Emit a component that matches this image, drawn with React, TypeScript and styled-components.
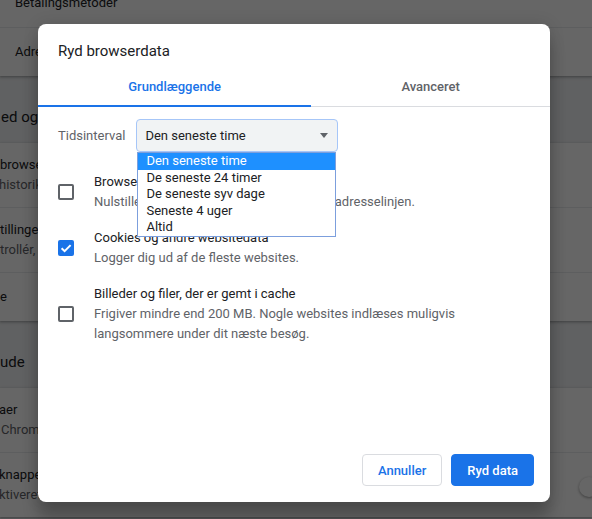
import React from "react";
import styled, { createGlobalStyle } from "styled-components";

const GlobalStyle = createGlobalStyle`
  html, body { margin: 0; padding: 0; }
  body { font-family: Roboto, "Noto Sans", "Liberation Sans", sans-serif; }
  * { box-sizing: border-box; }
`;

const Stage = styled.div`
  position: relative;
  width: 592px;
  height: 519px;
  overflow: hidden;
  background: #f1f3f4;
`;

/* ---------- background settings page ---------- */

const SettingsPage = styled.div`
  display: flex;
  flex-direction: column;
  margin-top: -21px;
  font-size: 13px;
  color: #202124;
`;

const Card = styled.div`
  background: #ffffff;
  box-shadow: 0 1px 2px rgba(60, 64, 67, 0.3), 0 1px 3px 1px rgba(60, 64, 67, 0.15);
`;

const SettingRow = styled.div<{ $tall?: boolean; $indent?: number }>`
  box-sizing: content-box;
  display: flex;
  align-items: center;
  height: ${(p) => (p.$tall ? 64 : 48)}px;
  padding-left: ${(p) => p.$indent ?? 0}px;
  & + & {
    border-top: 1px solid #e8eaed;
  }
`;

const RowText = styled.div<{ $shift?: number }>`
  display: flex;
  flex-direction: column;
  margin-left: ${(p) => p.$shift ?? 0}px;
  white-space: nowrap;
`;

const Primary = styled.span`
  line-height: 20px;
  color: #202124;
`;

const Secondary = styled.span<{ $shift?: number }>`
  line-height: 20px;
  color: #5f6368;
  margin-left: ${(p) => p.$shift ?? 0}px;
`;

const SectionTitle = styled.div<{ $shift?: number }>`
  height: 67px;
  display: flex;
  align-items: flex-end;
  padding-bottom: 16px;
  padding-left: ${(p) => p.$shift ?? 0}px;
  font-size: 15px;
  line-height: 20px;
  color: #202124;
  white-space: nowrap;
`;

const ToggleKnob = styled.div`
  margin-left: auto;
  margin-right: -7px;
  margin-top: 3px;
  width: 20px;
  height: 20px;
  border-radius: 50%;
  background: #ffffff;
  box-shadow: 0 1px 3px rgba(0, 0, 0, 0.4);
  flex-shrink: 0;
`;

const Scrim = styled.div`
  position: absolute;
  inset: 0;
  background: rgba(0, 0, 0, 0.6);
`;

/* ---------- dialog ---------- */

const Dialog = styled.div`
  position: absolute;
  top: 24px;
  left: 38px;
  width: 512px;
  height: 478px;
  background: #ffffff;
  border-radius: 8px;
  box-shadow: 0 0 16px rgba(0, 0, 0, 0.12), 0 16px 16px rgba(0, 0, 0, 0.24);
  display: flex;
  flex-direction: column;
  font-family: Roboto, "Noto Sans", "Liberation Sans", sans-serif;
`;

const DialogTitle = styled.div`
  padding: 17px 20px 5px;
  font-size: 15px;
  line-height: 20px;
  color: #202124;
`;

const TabBar = styled.div`
  display: flex;
  border-bottom: 1px solid #dadce0;
`;

const Tab = styled.div<{ $active?: boolean }>`
  position: relative;
  flex: 1 1 auto;
  height: 40px;
  display: flex;
  align-items: center;
  justify-content: center;
  font-size: 13px;
  font-weight: 500;
  color: ${(p) => (p.$active ? "#1a73e8" : "#5f6368")};
  &::after {
    content: "";
    display: ${(p) => (p.$active ? "block" : "none")};
    position: absolute;
    left: 0;
    right: 0;
    bottom: -1px;
    height: 2px;
    background: #1a73e8;
  }
`;

const Body = styled.div`
  padding: 12px 20px 0;
  display: flex;
  flex-direction: column;
`;

const TimeRow = styled.div`
  display: flex;
  align-items: center;
  gap: 11px;
`;

const FieldLabel = styled.span`
  font-size: 13px;
  color: #5f6368;
`;

const SelectWrap = styled.div`
  position: relative;
`;

const SelectBox = styled.div`
  width: 202px;
  height: 33px;
  display: flex;
  align-items: center;
  padding-left: 8px;
  background: #f1f3f4;
  border: 1px solid #a6c6f8;
  border-radius: 4px;
  font-size: 13px;
  color: #202124;
`;

const Caret = styled.span`
  margin-left: auto;
  margin-right: 9px;
  width: 0;
  height: 0;
  border-left: 4.5px solid transparent;
  border-right: 4.5px solid transparent;
  border-top: 5px solid #5f6368;
`;

const Popup = styled.ul`
  position: absolute;
  top: 100%;
  left: 1px;
  width: 199px;
  margin: 0;
  padding: 0;
  list-style: none;
  background: #ffffff;
  border: 1px solid #7c9fdd;
  z-index: 2;
`;

const PopupItem = styled.li<{ $selected?: boolean }>`
  height: 16.6px;
  line-height: 16.6px;
  padding-left: 8px;
  font-size: 13px;
  white-space: nowrap;
  color: ${(p) => (p.$selected ? "#ffffff" : "#202124")};
  background: ${(p) => (p.$selected ? "#1e90ff" : "transparent")};
`;

const CheckList = styled.div`
  margin-top: 20px;
  display: flex;
  flex-direction: column;
  gap: 16px;
`;

const CheckRow = styled.div`
  display: flex;
  align-items: center;
`;

const Box = styled.span<{ $checked?: boolean }>`
  flex-shrink: 0;
  width: 16px;
  height: 16px;
  border-radius: 2px;
  border: ${(p) => (p.$checked ? "none" : "2px solid #5f6368")};
  background: ${(p) => (p.$checked ? "#1a73e8" : "transparent")};
  display: flex;
  align-items: center;
  justify-content: center;
`;

const CheckText = styled.div`
  margin-left: 20px;
  display: flex;
  flex-direction: column;
  font-size: 13px;
  line-height: 20px;
`;

const CheckTitle = styled.span`
  color: #202124;
`;

const CheckDesc = styled.span`
  color: #5f6368;
`;

const Footer = styled.div`
  margin-top: auto;
  display: flex;
  justify-content: flex-end;
  gap: 9px;
  padding: 0 16px 16px;
`;

const Button = styled.button<{ $primary?: boolean }>`
  height: 32px;
  padding: 0 15px;
  border-radius: 4px;
  font-family: Roboto, "Noto Sans", "Liberation Sans", sans-serif;
  font-size: 13px;
  font-weight: 500;
  cursor: pointer;
  border: 1px solid ${(p) => (p.$primary ? "#1a73e8" : "#dadce0")};
  background: ${(p) => (p.$primary ? "#1a73e8" : "#ffffff")};
  color: ${(p) => (p.$primary ? "#ffffff" : "#1a73e8")};
`;

const CheckMark = () => (
  <svg width="16" height="16" viewBox="0 0 16 16">
    <path d="M3.6 8.3 L6.6 11.2 L12.6 5.1" fill="none" stroke="#ffffff" strokeWidth="2" />
  </svg>
);

const options = [
  "Den seneste time",
  "De seneste 24 timer",
  "De seneste syv dage",
  "Seneste 4 uger",
  "Altid",
];

export default function App() {
  return (
    <>
      <GlobalStyle />
      <Stage>
        <SettingsPage>
          <Card>
            <SettingRow $indent={15}>
              <RowText>
                <Primary>Betalingsmetoder</Primary>
              </RowText>
            </SettingRow>
            <SettingRow $indent={15}>
              <RowText>
                <Primary>Adresser og andet</Primary>
              </RowText>
            </SettingRow>
          </Card>
          <SectionTitle $shift={1}>ed og sikkerhed</SectionTitle>
          <Card>
            <SettingRow $tall>
              <RowText>
                <Primary>browserdata</Primary>
                <Secondary $shift={-1}>historik, cookies, cache m.m.</Secondary>
              </RowText>
            </SettingRow>
            <SettingRow $tall>
              <RowText>
                <Primary>tillinger for websites</Primary>
                <Secondary>trollér, hvilke oplysninger websites må bruge</Secondary>
              </RowText>
            </SettingRow>
            <SettingRow>
              <RowText>
                <Primary>e</Primary>
              </RowText>
            </SettingRow>
          </Card>
          <SectionTitle>ude</SectionTitle>
          <Card>
            <SettingRow $tall>
              <RowText $shift={-1}>
                <Primary>aer</Primary>
                <Secondary $shift={2}>Chrome Webshop</Secondary>
              </RowText>
            </SettingRow>
            <SettingRow $tall>
              <RowText $shift={-1}>
                <Primary>knappen Startside</Primary>
                <Secondary>ktiveret</Secondary>
              </RowText>
              <ToggleKnob />
            </SettingRow>
          </Card>
        </SettingsPage>

        <Scrim />

        <Dialog>
          <DialogTitle>Ryd browserdata</DialogTitle>
          <TabBar>
            <Tab $active>Grundlæggende</Tab>
            <Tab>Avanceret</Tab>
          </TabBar>
          <Body>
            <TimeRow>
              <FieldLabel>Tidsinterval</FieldLabel>
              <SelectWrap>
                <SelectBox>
                  Den seneste time
                  <Caret />
                </SelectBox>
                <Popup>
                  {options.map((o, i) => (
                    <PopupItem key={o} $selected={i === 0}>
                      {o}
                    </PopupItem>
                  ))}
                </Popup>
              </SelectWrap>
            </TimeRow>
            <CheckList>
              <CheckRow>
                <Box />
                <CheckText>
                  <CheckTitle>Browserhistorik</CheckTitle>
                  <CheckDesc>Nulstiller historikken og autofuldførelser i adresselinjen.</CheckDesc>
                </CheckText>
              </CheckRow>
              <CheckRow>
                <Box $checked>
                  <CheckMark />
                </Box>
                <CheckText>
                  <CheckTitle>Cookies og andre websitedata</CheckTitle>
                  <CheckDesc>Logger dig ud af de fleste websites.</CheckDesc>
                </CheckText>
              </CheckRow>
              <CheckRow>
                <Box />
                <CheckText>
                  <CheckTitle>Billeder og filer, der er gemt i cache</CheckTitle>
                  <CheckDesc>
                    Frigiver mindre end 200 MB. Nogle websites indlæses muligvis langsommere under dit næste besøg.
                  </CheckDesc>
                </CheckText>
              </CheckRow>
            </CheckList>
          </Body>
          <Footer>
            <Button>Annuller</Button>
            <Button $primary>Ryd data</Button>
          </Footer>
        </Dialog>
      </Stage>
    </>
  );
}
